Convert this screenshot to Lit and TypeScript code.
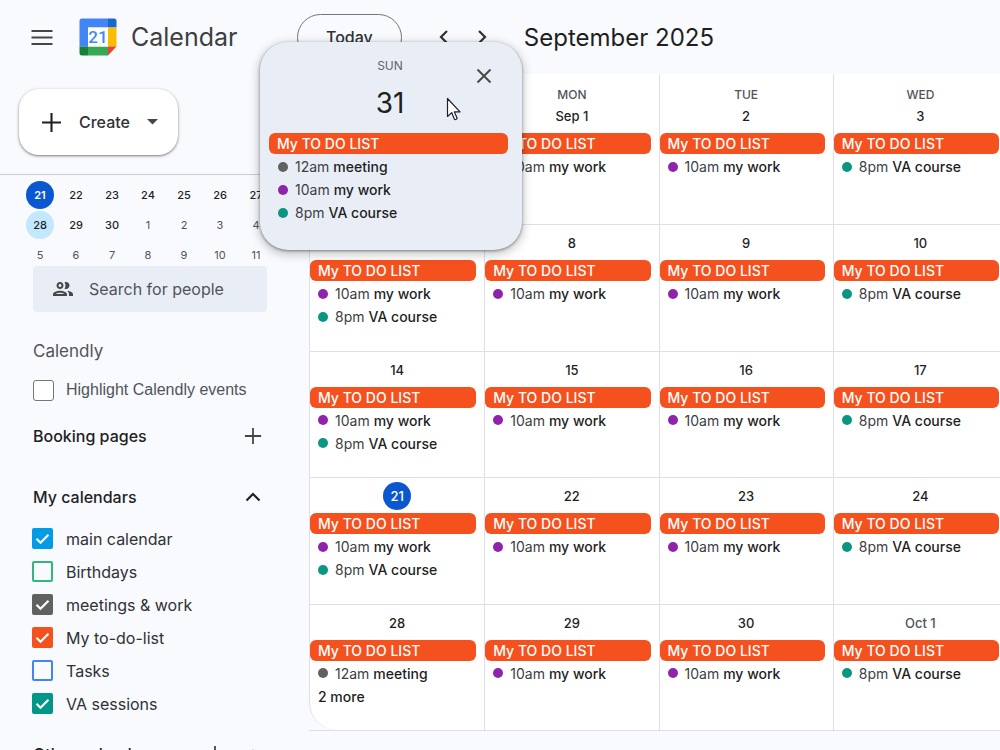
import { LitElement, html, css, svg, nothing } from "lit";
import { customElement, property, state } from "lit/decorators.js";
import { classMap } from "lit/directives/class-map.js";
import { styleMap } from "lit/directives/style-map.js";

type EventKind = "list" | "meeting" | "work" | "course";

interface Day {
  label: string;
  events: EventKind[];
  more?: number;
  today?: boolean;
  muted?: boolean;
}

interface CalendarSource {
  name: string;
  color: string;
  checked: boolean;
}

const EVENTS = {
  meeting: { time: "12am", title: "meeting", color: "#616161" },
  work: { time: "10am", title: "my work", color: "#8e24aa" },
  course: { time: "8pm", title: "VA course", color: "#0b9682" },
};

const SUNDAY: EventKind[] = ["list", "work", "course"];
const WORKDAY: EventKind[] = ["list", "work"];
const COURSE_DAY: EventKind[] = ["list", "course"];

const week = (labels: string[], first: Partial<Day> = {}): Day[] => [
  { label: labels[0], events: SUNDAY, ...first },
  { label: labels[1], events: WORKDAY },
  { label: labels[2], events: WORKDAY },
  { label: labels[3], events: COURSE_DAY, muted: labels[3] === "Oct 1" },
];

// The events of the 31st are listed in the open day popup.
const WEEKS: Day[][] = [
  week(["31", "Sep 1", "2", "3"], { events: [] }),
  week(["7", "8", "9", "10"]),
  week(["14", "15", "16", "17"]),
  week(["21", "22", "23", "24"], { today: true }),
  week(["28", "29", "30", "Oct 1"], { events: ["list", "meeting"], more: 2 }),
];

const eventStyles = css`
  .chip,
  .event,
  .more {
    display: flex;
    align-items: center;
    box-sizing: border-box;
    width: 100%;
    height: 21px;
    margin: 0 0 2px;
    padding: 0 8px;
    border: 0;
    background: none;
    color: #1f1f1f;
    font: 500 14px/21px Inter, "Liberation Sans", sans-serif;
    text-align: left;
    white-space: nowrap;
  }
  .chip {
    border-radius: 6px;
    background: #f5511e;
    color: #fff;
  }
  .event {
    gap: 4px;
  }
  .dot {
    flex: none;
    width: 10px;
    height: 10px;
    margin-right: 3px;
    border-radius: 50%;
  }
  .time {
    color: #3c4043;
    font-weight: 400;
  }
`;

const renderEvent = (kind: EventKind) => {
  if (kind === "list") return html`<button class="chip">My TO DO LIST</button>`;
  const e = EVENTS[kind];
  return html`<button class="event">
    <span class="dot" style=${styleMap({ background: e.color })}></span>
    <span class="time">${e.time}</span>
    <span>${e.title}</span>
  </button>`;
};

@customElement("month-grid")
export class MonthGrid extends LitElement {
  static styles = [
    eventStyles,
    css`
      :host {
        display: block;
        min-width: 0;
        overflow: hidden;
        border-bottom: 1px solid #dde1e6;
      }
      .month {
        display: grid;
        grid-template-rows: 29px 121px repeat(4, minmax(0, 1fr));
        box-sizing: border-box;
        width: calc(100% + 7px);
        height: 100%;
        border-left: 1px solid #dde1e6;
        border-bottom-left-radius: 28px;
        background: #fff;
      }
      thead,
      tbody {
        display: contents;
      }
      tr {
        display: grid;
        grid-template-columns: repeat(4, minmax(0, 1fr));
      }
      th,
      td {
        box-sizing: border-box;
        padding: 0;
      }
      th + th,
      td + td {
        border-left: 1px solid #dde1e6;
      }
      th {
        padding-top: 13px;
        color: #50545a;
        font-size: 12px;
        font-weight: 500;
        line-height: 16px;
      }
      .later td {
        padding-top: 5px;
        border-top: 1px solid #dde1e6;
      }
      .events {
        padding-right: 8px;
      }
      .number {
        display: flex;
        align-items: center;
        justify-content: center;
        height: 26px;
        margin-bottom: 4px;
        font-size: 13px;
        font-weight: 500;
      }
      .muted {
        color: #50545a;
      }
      .today {
        flex: none;
        width: 28px;
        border-radius: 50%;
        background: #0b57d0;
        color: #fff;
        line-height: 28px;
        text-align: center;
      }
    `,
  ];

  render() {
    return html`
      <table class="month">
        <thead>
          <tr>
            ${["SUN", "MON", "TUE", "WED"].map((d) => html`<th scope="col">${d}</th>`)}
          </tr>
        </thead>
        <tbody>
          ${WEEKS.map(
            (days, i) => html`<tr class=${classMap({ later: i > 0 })}>
              ${days.map(
                (d) => html`<td>
                  <div class=${classMap({ number: true, muted: !!d.muted })}>
                    <span class=${classMap({ today: !!d.today })}>${d.label}</span>
                  </div>
                  <div class="events">
                    ${d.events.map(renderEvent)}
                    ${d.more ? html`<button class="more">${d.more} more</button>` : nothing}
                  </div>
                </td>`
              )}
            </tr>`
          )}
        </tbody>
      </table>
    `;
  }
}

@customElement("day-popup")
export class DayPopup extends LitElement {
  static styles = [
    eventStyles,
    css`
      :host {
        display: block;
        box-sizing: border-box;
        height: 208px;
        padding: 16px 14px 0 9px;
        border-radius: 28px;
        background: #e9eef6;
        box-shadow: 0 1px 3px rgba(0, 0, 0, 0.4), 0 3px 10px 2px rgba(0, 0, 0, 0.2);
      }
      .weekday,
      .date {
        margin: 0;
        padding-left: 3px;
        font-weight: 400;
        text-align: center;
      }
      .weekday {
        color: #5f6368;
        font-size: 12px;
        line-height: 16px;
      }
      .date {
        height: 59px;
        color: #1f1f1f;
        font-size: 28px;
        line-height: 58px;
      }
      .event {
        padding-left: 9px;
      }
      .close {
        position: absolute;
        top: 20px;
        right: 24px;
        width: 28px;
        height: 28px;
        padding: 0;
        border: 0;
        background: none;
      }
      .close svg {
        display: block;
      }
    `,
  ];

  render() {
    return html`
      <p class="weekday">SUN</p>
      <h2 class="date">31</h2>
      <button class="close" aria-label="Close">
        <svg width="28" height="28" viewBox="0 0 28 28">
          <path d="M7.500 7.500l13 13M20.500 7.500l-13 13" stroke="#444746" stroke-width="1.9" />
        </svg>
      </button>
      ${(["list", "meeting", "work", "course"] as EventKind[]).map(renderEvent)}
    `;
  }
}

@customElement("calendar-check")
export class CalendarCheck extends LitElement {
  @property() name = "";
  @property() color = "#444746";
  @property({ type: Boolean }) checked = false;

  static styles = css`
    .row {
      display: flex;
      align-items: center;
      gap: 13px;
      height: 33px;
      color: #303134;
      font-size: 16px;
      white-space: nowrap;
    }
    .box {
      display: grid;
      width: 21px;
      height: 21px;
    }
    .box > * {
      grid-area: 1 / 1;
    }
    input {
      appearance: none;
      box-sizing: border-box;
      width: 21px;
      height: 21px;
      margin: 0;
      border: 2px solid;
      border-radius: 2px;
    }
    svg {
      pointer-events: none;
    }
  `;

  render() {
    return html`<label class="row">
      <span class="box">
        <input
          type="checkbox"
          .checked=${this.checked}
          @change=${(e: Event) => (this.checked = (e.target as HTMLInputElement).checked)}
          style=${styleMap({
            borderColor: this.color,
            background: this.checked ? this.color : "transparent",
          })}
        />
        ${this.checked
          ? html`<svg width="21" height="21" viewBox="0 0 21 21">
              <path d="M4.500 10.800l4 3.900 8-8" fill="none" stroke="#fff" stroke-width="2.2" />
            </svg>`
          : nothing}
      </span>
      <span>${this.name}</span>
    </label>`;
  }
}

const plus = (size: number, color: string, weight: number) => svg`
  <svg width=${size} height=${size} viewBox="0 0 20 20">
    <path d="M10 1v18M1 10h18" stroke=${color} stroke-width=${weight} />
  </svg>`;

@customElement("side-bar")
export class SideBar extends LitElement {
  @state() private calendars: CalendarSource[] = [
    { name: "main calendar", color: "#039be5", checked: true },
    { name: "Birthdays", color: "#33b679", checked: false },
    { name: "meetings & work", color: "#616161", checked: true },
    { name: "My to-do-list", color: "#f4511e", checked: true },
    { name: "Tasks", color: "#4285f4", checked: false },
    { name: "VA sessions", color: "#009688", checked: true },
  ];

  static styles = css`
    :host {
      display: block;
      overflow: hidden;
    }
    button {
      font-family: inherit;
    }
    .create {
      display: flex;
      align-items: center;
      height: 66px;
      margin: 15px 0 19px 19px;
      padding: 0 20px 0 22px;
      border: 0;
      border-radius: 20px;
      background: #fff;
      box-shadow: 0 1px 2px rgba(0, 0, 0, 0.35), 0 1px 3px 1px rgba(0, 0, 0, 0.14);
      color: #303134;
      font-size: 16px;
      font-weight: 500;
    }
    .create span {
      margin: 0 17px;
    }
    .scroll {
      border-top: 1px solid #c9ccd0;
      padding: 5px 33px 0 22px;
    }
    .mini {
      width: 252px;
      table-layout: fixed;
      border-spacing: 0;
      color: #50545a;
      font-size: 11px;
      text-align: center;
    }
    .mini td {
      height: 30px;
      padding: 0;
    }
    .mini span {
      display: block;
      width: 28px;
      margin: 0 auto;
      border-radius: 50%;
      line-height: 28px;
    }
    .mini .current {
      color: #1f1f1f;
      font-weight: 500;
    }
    .mini .today {
      background: #0b57d0;
      color: #fff;
      font-weight: 600;
    }
    .mini .selected {
      background: #c2e7ff;
    }
    .search {
      display: flex;
      align-items: center;
      gap: 14px;
      height: 46px;
      margin: -4px 9px 0 11px;
      padding-left: 18px;
      border-radius: 4px;
      background: #e9eef6;
    }
    .search input {
      flex: 1;
      min-width: 0;
      padding: 0;
      border: 0;
      outline: 0;
      background: none;
      color: #1f1f1f;
      font: 400 16px Inter, "Liberation Sans", sans-serif;
    }
    .search input::placeholder {
      color: #50545a;
      opacity: 1;
    }
    .sections {
      padding-left: 11px;
    }
    h2 {
      margin: 0;
      color: #1f1f1f;
      font-size: 16px;
      font-weight: 500;
      line-height: 24px;
    }
    .calendly-title {
      margin-top: 27px;
      color: #50545a;
      font-size: 17px;
      font-weight: 400;
    }
    .calendly {
      display: flex;
      align-items: center;
      gap: 12px;
      height: 24px;
      margin: 15px 0 22px;
      color: #50545a;
      font: 400 16px "Liberation Sans", Arial, sans-serif;
      white-space: nowrap;
    }
    .calendly input {
      appearance: none;
      box-sizing: border-box;
      flex: none;
      width: 21px;
      height: 21px;
      margin: 0;
      border: 1px solid #767676;
      border-radius: 3px;
      background: #fff;
    }
    .head {
      display: flex;
      align-items: center;
      justify-content: space-between;
      height: 24px;
      padding-right: 11px;
    }
    .mine {
      margin: 37px 0 13px;
    }
    .head button {
      display: grid;
      place-items: center;
      width: 24px;
      height: 24px;
      padding: 0;
      border: 0;
      background: none;
    }
    .tools {
      display: flex;
      gap: 14px;
    }
    .list {
      margin: 0 0 0 -1px;
      padding: 0;
      list-style: none;
    }
    .other {
      margin-top: 22px;
    }
  `;

  private miniRow(days: number[], kind: (i: number) => string) {
    return html`<tr>
      ${days.map((d, i) => html`<td><span class=${kind(i)}>${d}</span></td>`)}
    </tr>`;
  }

  private chevron() {
    return svg`<svg width="18" height="18" viewBox="0 0 18 18">
      <path d="M2.500 12.500L9 6l6.500 6.500" fill="none" stroke="#1f1f1f" stroke-width="2.2" />
    </svg>`;
  }

  render() {
    return html`
      <button class="create">
        ${plus(21, "#1f1f1f", 2)}
        <span>Create</span>
        <svg width="11" height="6" viewBox="0 0 11 6"><path d="M0 0h11L5.500 5.500z" fill="#444746" /></svg>
      </button>
      <div class="scroll">
        <table class="mini" aria-label="September 2025">
          <tbody>
            ${this.miniRow([21, 22, 23, 24, 25, 26, 27], (i) => (i ? "current" : "today"))}
            ${this.miniRow([28, 29, 30, 1, 2, 3, 4], (i) =>
              i === 0 ? "current selected" : i < 3 ? "current" : ""
            )}
            ${this.miniRow([5, 6, 7, 8, 9, 10, 11], () => "")}
          </tbody>
        </table>
        <label class="search">
          <svg width="24" height="24" viewBox="0 0 24 24" fill="#444746">
            <path
              d="M9 13.750c-2.340 0-7 1.170-7 3.500V19h14v-1.750c0-2.330-4.660-3.500-7-3.500zM4.340 17c.84-.58 2.870-1.250 4.660-1.250s3.820.67 4.660 1.250H4.340zM9 12c1.930 0 3.500-1.570 3.500-3.500S10.930 5 9 5 5.500 6.570 5.500 8.500 7.070 12 9 12zm0-5c.83 0 1.500.67 1.500 1.500S9.830 10 9 10s-1.500-.67-1.500-1.500S8.170 7 9 7zm7.040 6.810c1.160.84 1.960 1.960 1.960 3.440V19h4v-1.750c0-2.020-3.500-3.170-5.960-3.440zM15 12c1.930 0 3.500-1.570 3.500-3.500S16.930 5 15 5c-.54 0-1.040.13-1.500.35.63.89 1 1.980 1 3.150s-.37 2.260-1 3.150c.46.22.96.35 1.500.35z"
            />
          </svg>
          <input type="text" placeholder="Search for people" aria-label="Search for people" />
        </label>
        <div class="sections">
          <h2 class="calendly-title">Calendly</h2>
          <label class="calendly"><input type="checkbox" />Highlight Calendly events</label>
          <div class="head">
            <h2>Booking pages</h2>
            <button aria-label="Create booking page">${plus(18, "#444746", 2)}</button>
          </div>
          <div class="head mine">
            <h2>My calendars</h2>
            <button aria-label="Collapse my calendars">${this.chevron()}</button>
          </div>
          <ul class="list">
            ${this.calendars.map(
              (c) => html`<li>
                <calendar-check .name=${c.name} .color=${c.color} .checked=${c.checked}></calendar-check>
              </li>`
            )}
          </ul>
          <div class="head other">
            <h2>Other calendars</h2>
            <div class="tools">
              <button aria-label="Add other calendars">${plus(18, "#444746", 2)}</button>
              <button aria-label="Collapse other calendars">${this.chevron()}</button>
            </div>
          </div>
        </div>
      </div>
    `;
  }
}

@customElement("app-root")
export class AppRoot extends LitElement {
  static styles = css`
    :host {
      position: relative;
      display: grid;
      grid-template-columns: 309px minmax(0, 1fr);
      grid-template-rows: 74px minmax(0, 1fr);
      height: 100vh;
      overflow: hidden;
      background: #f8fafd;
      color: #1f1f1f;
      font-family: Inter, "Liberation Sans", sans-serif;
    }
    header {
      grid-column: 1 / -1;
      display: grid;
      grid-template-columns: 297px minmax(0, 1fr);
      align-items: center;
    }
    .brand,
    .nav {
      display: flex;
      align-items: center;
    }
    .brand {
      padding-left: 30px;
    }
    .icon {
      display: grid;
      place-items: center;
      width: 24px;
      height: 24px;
      padding: 0;
      border: 0;
      background: none;
    }
    .logo {
      margin: 0 14px 0 25px;
    }
    .product {
      color: #3c4043;
      font-size: 25px;
    }
    .today {
      height: 47px;
      padding: 0 28px;
      border: 1px solid #747775;
      border-radius: 24px;
      background: none;
      color: #303134;
      font: 500 16px Inter, "Liberation Sans", sans-serif;
    }
    .arrows {
      display: flex;
      gap: 14px;
      margin: 0 30px;
    }
    h1 {
      margin: 0;
      font-size: 24px;
      font-weight: 400;
      white-space: nowrap;
    }
    month-grid {
      margin-bottom: 19px;
    }
    day-popup {
      position: absolute;
      top: 42px;
      left: 260px;
      width: 262px;
    }
    .pointer {
      position: absolute;
      top: 97px;
      left: 446px;
    }
    .digits {
      font: 500 17px Roboto, sans-serif;
    }
  `;

  private arrow(d: string) {
    return svg`<svg width="24" height="24" viewBox="0 0 24 24">
      <path d=${d} fill="none" stroke="#303134" stroke-width="2.2" />
    </svg>`;
  }

  render() {
    return html`
      <header>
        <div class="brand">
          <button class="icon" aria-label="Main menu">
            <svg width="24" height="24" viewBox="0 0 24 24">
              <path d="M1.500 6h21M1.500 12.500h21M1.500 19h21" stroke="#444746" stroke-width="2" />
            </svg>
          </button>
          <svg class="logo" width="38" height="38" viewBox="0 0 38 38" aria-hidden="true">
            <path d="M3 0.500h26v9H9v19H0.500v-25.500a2.500 2.500 0 0 1 2.500-2.500z" fill="#4285f4" />
            <path d="M29 0.500h6a2.500 2.500 0 0 1 2.500 2.500v6.500H29z" fill="#1967d2" />
            <path d="M29 9.500h8.500v19H29z" fill="#fbbc04" />
            <path d="M9 28.500h20v9H9z" fill="#34a853" />
            <path d="M0.500 28.500H9v9H3a2.500 2.500 0 0 1-2.500-2.500z" fill="#188038" />
            <path d="M29 28.500h8.500l-8.500 9z" fill="#ea4335" />
            <path d="M9 9.500h20v19H9z" fill="#fff" />
            <text class="digits" x="19" y="25" text-anchor="middle" fill="#4285f4">21</text>
          </svg>
          <span class="product">Calendar</span>
        </div>
        <div class="nav">
          <button class="today">Today</button>
          <div class="arrows">
            <button class="icon" aria-label="Previous month">${this.arrow("M15 6l-6 6 6 6")}</button>
            <button class="icon" aria-label="Next month">${this.arrow("M9 6l6 6-6 6")}</button>
          </div>
          <h1>September 2025</h1>
        </div>
      </header>
      <side-bar></side-bar>
      <month-grid></month-grid>
      <day-popup role="dialog" aria-label="Sunday, August 31"></day-popup>
      <svg class="pointer" width="16" height="25" viewBox="0 0 16 25" aria-hidden="true">
        <path
          d="M1.500 1.500v18l4.200-3.900 2.700 6.600q1.500 1 2.800-1l-2.800-6.300h5.600z"
          fill="#fff"
          stroke="#1f1f2e"
          stroke-width="1.200"
          stroke-linejoin="round"
        />
      </svg>
    `;
  }
}
